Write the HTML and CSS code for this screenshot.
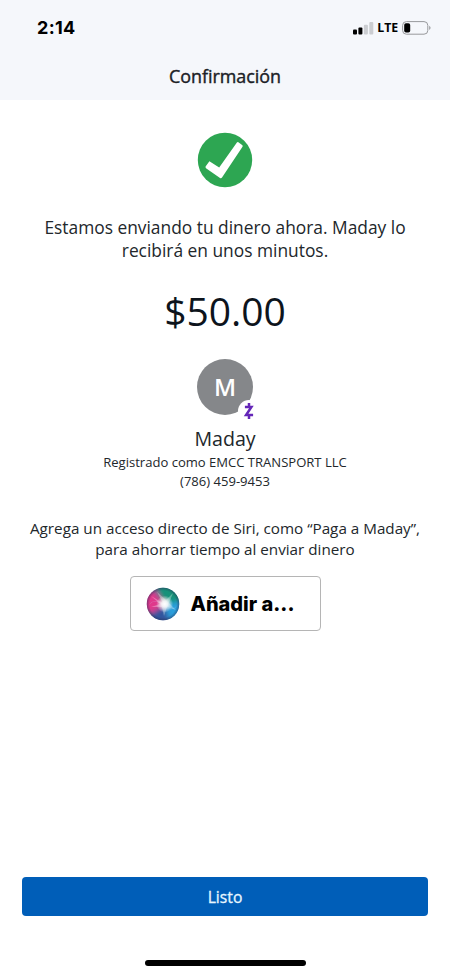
FILE: index.html
```html
<!DOCTYPE html>
<html lang="es">
<head>
<meta charset="utf-8">
<meta name="viewport" content="width=device-width, initial-scale=1">
<title>Confirmación</title>
<link rel="stylesheet" href="styles.css">
</head>
<body>
<div class="screen">
  <header class="header">
    <div class="status">
      <span class="time">2:14</span>
      <div class="indicators">
        <svg class="signal" width="21" height="14" viewBox="0 0 21 14">
          <rect x="0" y="8.6" width="4" height="4.9" rx="1"/>
          <rect x="5.4" y="6.4" width="4" height="7.1" rx="1"/>
          <rect class="off" x="10.9" y="3.7" width="4" height="9.8" rx="1"/>
          <rect class="off" x="16.3" y="1" width="4" height="12.5" rx="1"/>
        </svg>
        <span class="network">LTE</span>
        <svg class="battery" width="30" height="14" viewBox="0 0 30 14">
          <rect x=".6" y=".6" width="25.2" height="12.6" rx="3.8" fill="none" stroke="#98999c" stroke-width="1"/>
          <rect x="2.2" y="2.2" width="6" height="9.4" rx="1.8"/>
          <path d="M27.2 4.8C29 5.6 29 8.2 27.2 9Z" fill="#98999c"/>
        </svg>
      </div>
    </div>
    <h1 class="title">Confirmación</h1>
  </header>
  <main class="content">
    <svg class="check" width="56" height="56" viewBox="0 0 56 56">
      <circle cx="28" cy="28" r="27.2" fill="#2da652"/>
      <path d="M8.6 34.6 12.4 29.2 22.2 35.6 39.9 10.4Q40.6 9.8 41.4 10.3L45.4 13.2Q46 13.8 45.5 14.7L25 45.6Q24.2 46.7 23 46L9 36.2Q8.2 35.4 8.6 34.6Z" fill="#fff"/>
    </svg>
    <p class="message">Estamos enviando tu dinero ahora. Maday lo<br>recibirá en unos minutos.</p>
    <p class="amount">$50.00</p>
    <div class="avatar">
      <span>M</span>
      <svg class="badge" width="22" height="22" viewBox="0 0 22 22">
        <circle cx="11" cy="11" r="11" fill="#fff"/>
        <path d="M6.9 7H13.4L8.1 15H15.1M11 3V7M11 15V19" fill="none" stroke="#6426b8" stroke-width="2.5"/>
      </svg>
    </div>
    <h2 class="name">Maday</h2>
    <p class="detail registered">Registrado como EMCC TRANSPORT LLC</p>
    <p class="detail phone">(786) 459-9453</p>
    <p class="hint">Agrega un acceso directo de Siri, como “Paga a Maday”,<br>para ahorrar tiempo al enviar dinero</p>
    <button class="siri">
      <svg width="34" height="34" viewBox="0 0 34 34">
        <defs>
          <clipPath id="orb"><circle cx="17" cy="17" r="16.2"/></clipPath>
          <filter id="soft" x="-50%" y="-50%" width="200%" height="200%"><feGaussianBlur stdDeviation="2.6"/></filter>
          <filter id="glow"><feGaussianBlur stdDeviation=".6"/></filter>
          <radialGradient id="core"><stop offset="0" stop-color="#fff"/><stop offset=".35" stop-color="#fff" stop-opacity=".85"/><stop offset="1" stop-color="#fff" stop-opacity="0"/></radialGradient>
          <radialGradient id="rim"><stop offset=".82" stop-color="#252b50" stop-opacity="0"/><stop offset="1" stop-color="#252b50" stop-opacity=".45"/></radialGradient>
        </defs>
        <g clip-path="url(#orb)">
          <rect width="34" height="34" fill="#596b98"/>
          <g filter="url(#soft)">
            <path d="M10-2H36V16L19 17Z" fill="#159279"/>
            <path d="M-2 6 8 3 18 17 8 26-2 25Z" fill="#e0398b"/>
            <path d="M18 17 36 14V30L24 36Z" fill="#2a9fdc"/>
            <path d="M3 28 17 19 25 36H4Z" fill="#31559d"/>
          </g>
          <g filter="url(#glow)">
            <path d="M2 20Q7 10 17 18T32 17Q27 27 17 18T2 20Z" fill="#c9dcff" opacity=".35"/>
            <path d="M17 16 11 5 20 13 27 6 23 16 30 23 21 20 18 29 16 20 5 20 14 17 5 9Z" fill="#fff" opacity=".3"/>
          </g>
          <circle cx="18.7" cy="17" r="8.5" fill="url(#core)"/>
          <circle cx="17" cy="17" r="16.2" fill="url(#rim)"/>
        </g>
      </svg>
      <span>Añadir a...</span>
    </button>
  </main>
  <footer class="footer">
    <button class="done">Listo</button>
    <div class="home-bar"></div>
  </footer>
</div>
</body>
</html>
```

FILE: styles.css
```css
* { box-sizing: border-box; }
body, h1, h2, p { margin: 0; }
body { background: #fff; color: #22272b; font-family: "Open Sans", "Noto Sans", sans-serif; }
button { font: inherit; cursor: pointer; }
svg { display: block; flex: none; }

.screen { height: 975px; display: flex; flex-direction: column; }
.header { height: 100px; flex: none; background: #f5f7fb; }
.status { height: 55px; padding: 0 18px 0 37px; display: flex; align-items: center; justify-content: space-between; color: #000; }
.time { font: 700 18px/20px Inter, sans-serif; letter-spacing: .3px; }
.indicators { display: flex; align-items: center; }
.signal .off { fill: #cbcdd1; }
.network { margin: 0 4px 0 3px; font-size: 12.3px; line-height: 14px; font-weight: 700; letter-spacing: -.1px; }
.title { font-size: 17.9px; line-height: 24px; font-weight: 400; -webkit-text-stroke: .4px; text-align: center; margin-top: 9px; color: #1b2126; }

.content { flex: 1; display: flex; flex-direction: column; align-items: center; text-align: center; white-space: nowrap; }
.check { margin-top: 32px; }
.message { margin-top: 28px; font-size: 17.37px; line-height: 23px; }
.amount { margin-top: 22px; font-size: 39px; line-height: 54px; color: #0d141c; }
.avatar { position: relative; width: 56px; height: 56px; margin-top: 21px; border-radius: 50%; background: #85878a; color: #fff; display: flex; align-items: center; justify-content: center; font-size: 24px; line-height: 32px; font-weight: 600; }
.avatar span { margin-top: -1px; }
.badge { position: absolute; left: 41px; top: 41px; }
.name { margin-top: 10px; font-size: 19.6px; line-height: 28px; font-weight: 400; }
.detail { font-size: 13.05px; line-height: 19px; }
.hint { margin-top: 27px; font-size: 15.23px; line-height: 21px; }
.siri { width: 191px; height: 55px; margin-top: 16px; padding: 0 0 0 15px; display: flex; align-items: center; gap: 11px; background: #fff; border: 1px solid #b5b5b5; border-radius: 4px; color: #000; }
.siri span { font: 800 20px/24px Inter, sans-serif; }

.footer { height: 98px; flex: none; padding: 0 22px; display: flex; flex-direction: column; align-items: center; }
.done { width: 100%; height: 39px; border: 0; border-radius: 4px; background: #005eb8; color: #e8f7ff; font-size: 15.7px; -webkit-text-stroke: .3px; }
.home-bar { width: 161px; height: 6px; margin-top: 44px; border-radius: 3px; background: #000; }
```
